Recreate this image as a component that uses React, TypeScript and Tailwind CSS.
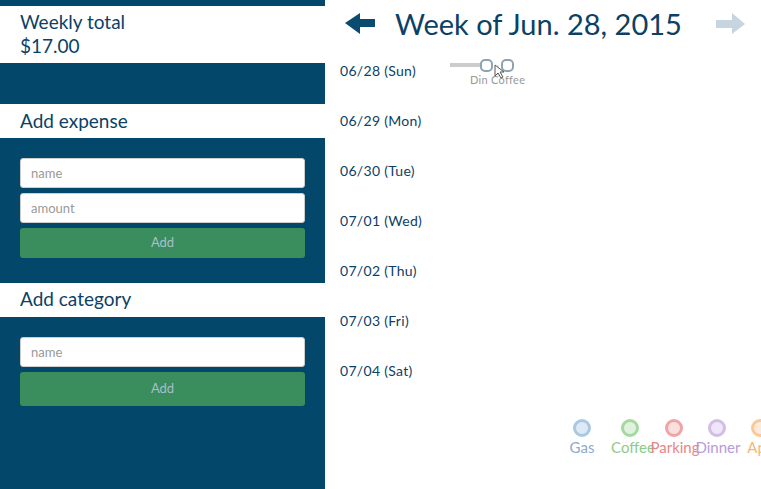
const days = ['06/28 (Sun)', '06/29 (Mon)', '06/30 (Tue)', '07/01 (Wed)', '07/02 (Thu)', '07/03 (Fri)', '07/04 (Sat)']

const legend = [
  { name: 'Gas', x: 582, stroke: '#a9c8e4', fill: '#dde9f5', text: '#8eaacb' },
  { name: 'Coffee', x: 633, stroke: '#a6d9a0', fill: '#e0f2dd', text: '#8ecb86' },
  { name: 'Parking', x: 675, stroke: '#f2a3a3', fill: '#f9e0e0', text: '#ea8585' },
  { name: 'Dinner', x: 718, stroke: '#d2bde6', fill: '#efe6f7', text: '#b89ad6' },
  { name: 'Apps', x: 764, stroke: '#f8c99a', fill: '#fcebd9', text: '#f5b57a' },
]

const circleX = [582, 630, 674, 717, 760]

function Input({ placeholder }: { placeholder: string }) {
  return (
    <input
      placeholder={placeholder}
      className="h-[30px] w-full rounded-[3px] border border-[#cccccc] bg-white px-[10px] text-[13px] text-[#555] placeholder:text-[#999] outline-none"
    />
  )
}

function AddButton({ tall }: { tall?: boolean }) {
  return (
    <button className={`w-full rounded-[3px] bg-[#3a8d5d] text-[13px] text-[#a9bfcc] ${tall ? 'h-[34px]' : 'h-[30px]'}`}>
      Add
    </button>
  )
}

export default function App() {
  return (
    <div className="flex h-[489px] w-[761px] overflow-hidden bg-white text-[#0b4165]" style={{ fontFamily: 'Lato, "Open Sans", sans-serif' }}>
      {/* ── Sidebar ── */}
      <aside className="flex w-[325px] shrink-0 flex-col bg-[#03476a]">
        <div className="mt-[6px] h-[57px] bg-white px-[20px] pt-[4px] text-[19px] leading-[24px]">
          <div>Weekly total</div>
          <div>$17.00</div>
        </div>
        <div className="h-[41px]" />
        <div className="h-[34px] bg-white px-[20px] pt-[5px] text-[19px] leading-[24px]">Add expense</div>
        <div className="flex flex-col gap-[5px] px-[20px] pt-[20px]">
          <Input placeholder="name" />
          <Input placeholder="amount" />
          <AddButton />
        </div>
        <div className="mt-[25px] h-[34px] bg-white px-[20px] pt-[4px] text-[19px] leading-[24px]">Add category</div>
        <div className="flex flex-col gap-[5px] px-[20px] pt-[20px]">
          <Input placeholder="name" />
          <AddButton tall />
        </div>
      </aside>

      {/* ── Week view ── */}
      <main className="relative flex-1">
        <div className="flex h-[47px] items-center pl-[20px] pr-[15px]">
          <svg width="31" height="22" viewBox="0 0 31 22">
            <polygon points="0,10 15,0 15,6 30,6 30,14 15,14 15,21" fill="#0b4b6f" />
          </svg>
          <h1 className="ml-[19px] flex-1 text-[29px] leading-none">Week of Jun. 28, 2015</h1>
          <svg width="30" height="22" viewBox="0 0 30 22">
            <polygon points="0,7 16,7 16,0 29,11 16,21 16,15 0,15" fill="#c6d5df" />
          </svg>
        </div>

        <div className="flex flex-col pl-[15px] pt-[15px]">
          {days.map((d, i) => (
            <div key={d} className="relative h-[50px] text-[14px] leading-[18px] tracking-[0.3px]">
              {d}
              {i === 0 && (
                <svg className="absolute left-[110px] top-[-7px]" width="90" height="32">
                  <line x1="0" y1="10" x2="36" y2="10" stroke="#cccccc" strokeWidth="4" />
                  <line x1="48" y1="10" x2="48" y2="22" stroke="#cfcfcf" strokeWidth="1" />
                  <rect x="31" y="5" width="11" height="11" rx="4" fill="#fff" stroke="#8ea3b2" strokeWidth="2" />
                  <rect x="52" y="5" width="11" height="11" rx="4" fill="#fff" stroke="#8ea3b2" strokeWidth="2" />
                  <text x="20" y="29" fontSize="11" fill="#999" fontFamily="Lato, sans-serif">Din</text>
                  <text x="41" y="29" fontSize="11" fill="#999" fontFamily="Lato, sans-serif">Coffee</text>
                  <path d="M45 10 l0 11 l3 -3 l3 5 l2 -1 l-3 -5 l4 0 z" fill="#fff" stroke="#555" strokeWidth="1" />
                </svg>
              )}
            </div>
          ))}
        </div>

        {/* legend */}
        <svg className="absolute left-0 top-[410px]" width="436" height="60">
          {legend.map((l, i) => (
            <g key={l.name}>
              <circle cx={circleX[i] - 325} cy="18" r="7.5" fill={l.fill} stroke={l.stroke} strokeWidth="3" />
              <text x={l.x - 325} y="43" textAnchor="middle" fontSize="15" fill={l.text} fontFamily="Lato, sans-serif">{l.name}</text>
            </g>
          ))}
        </svg>
      </main>
    </div>
  )
}
